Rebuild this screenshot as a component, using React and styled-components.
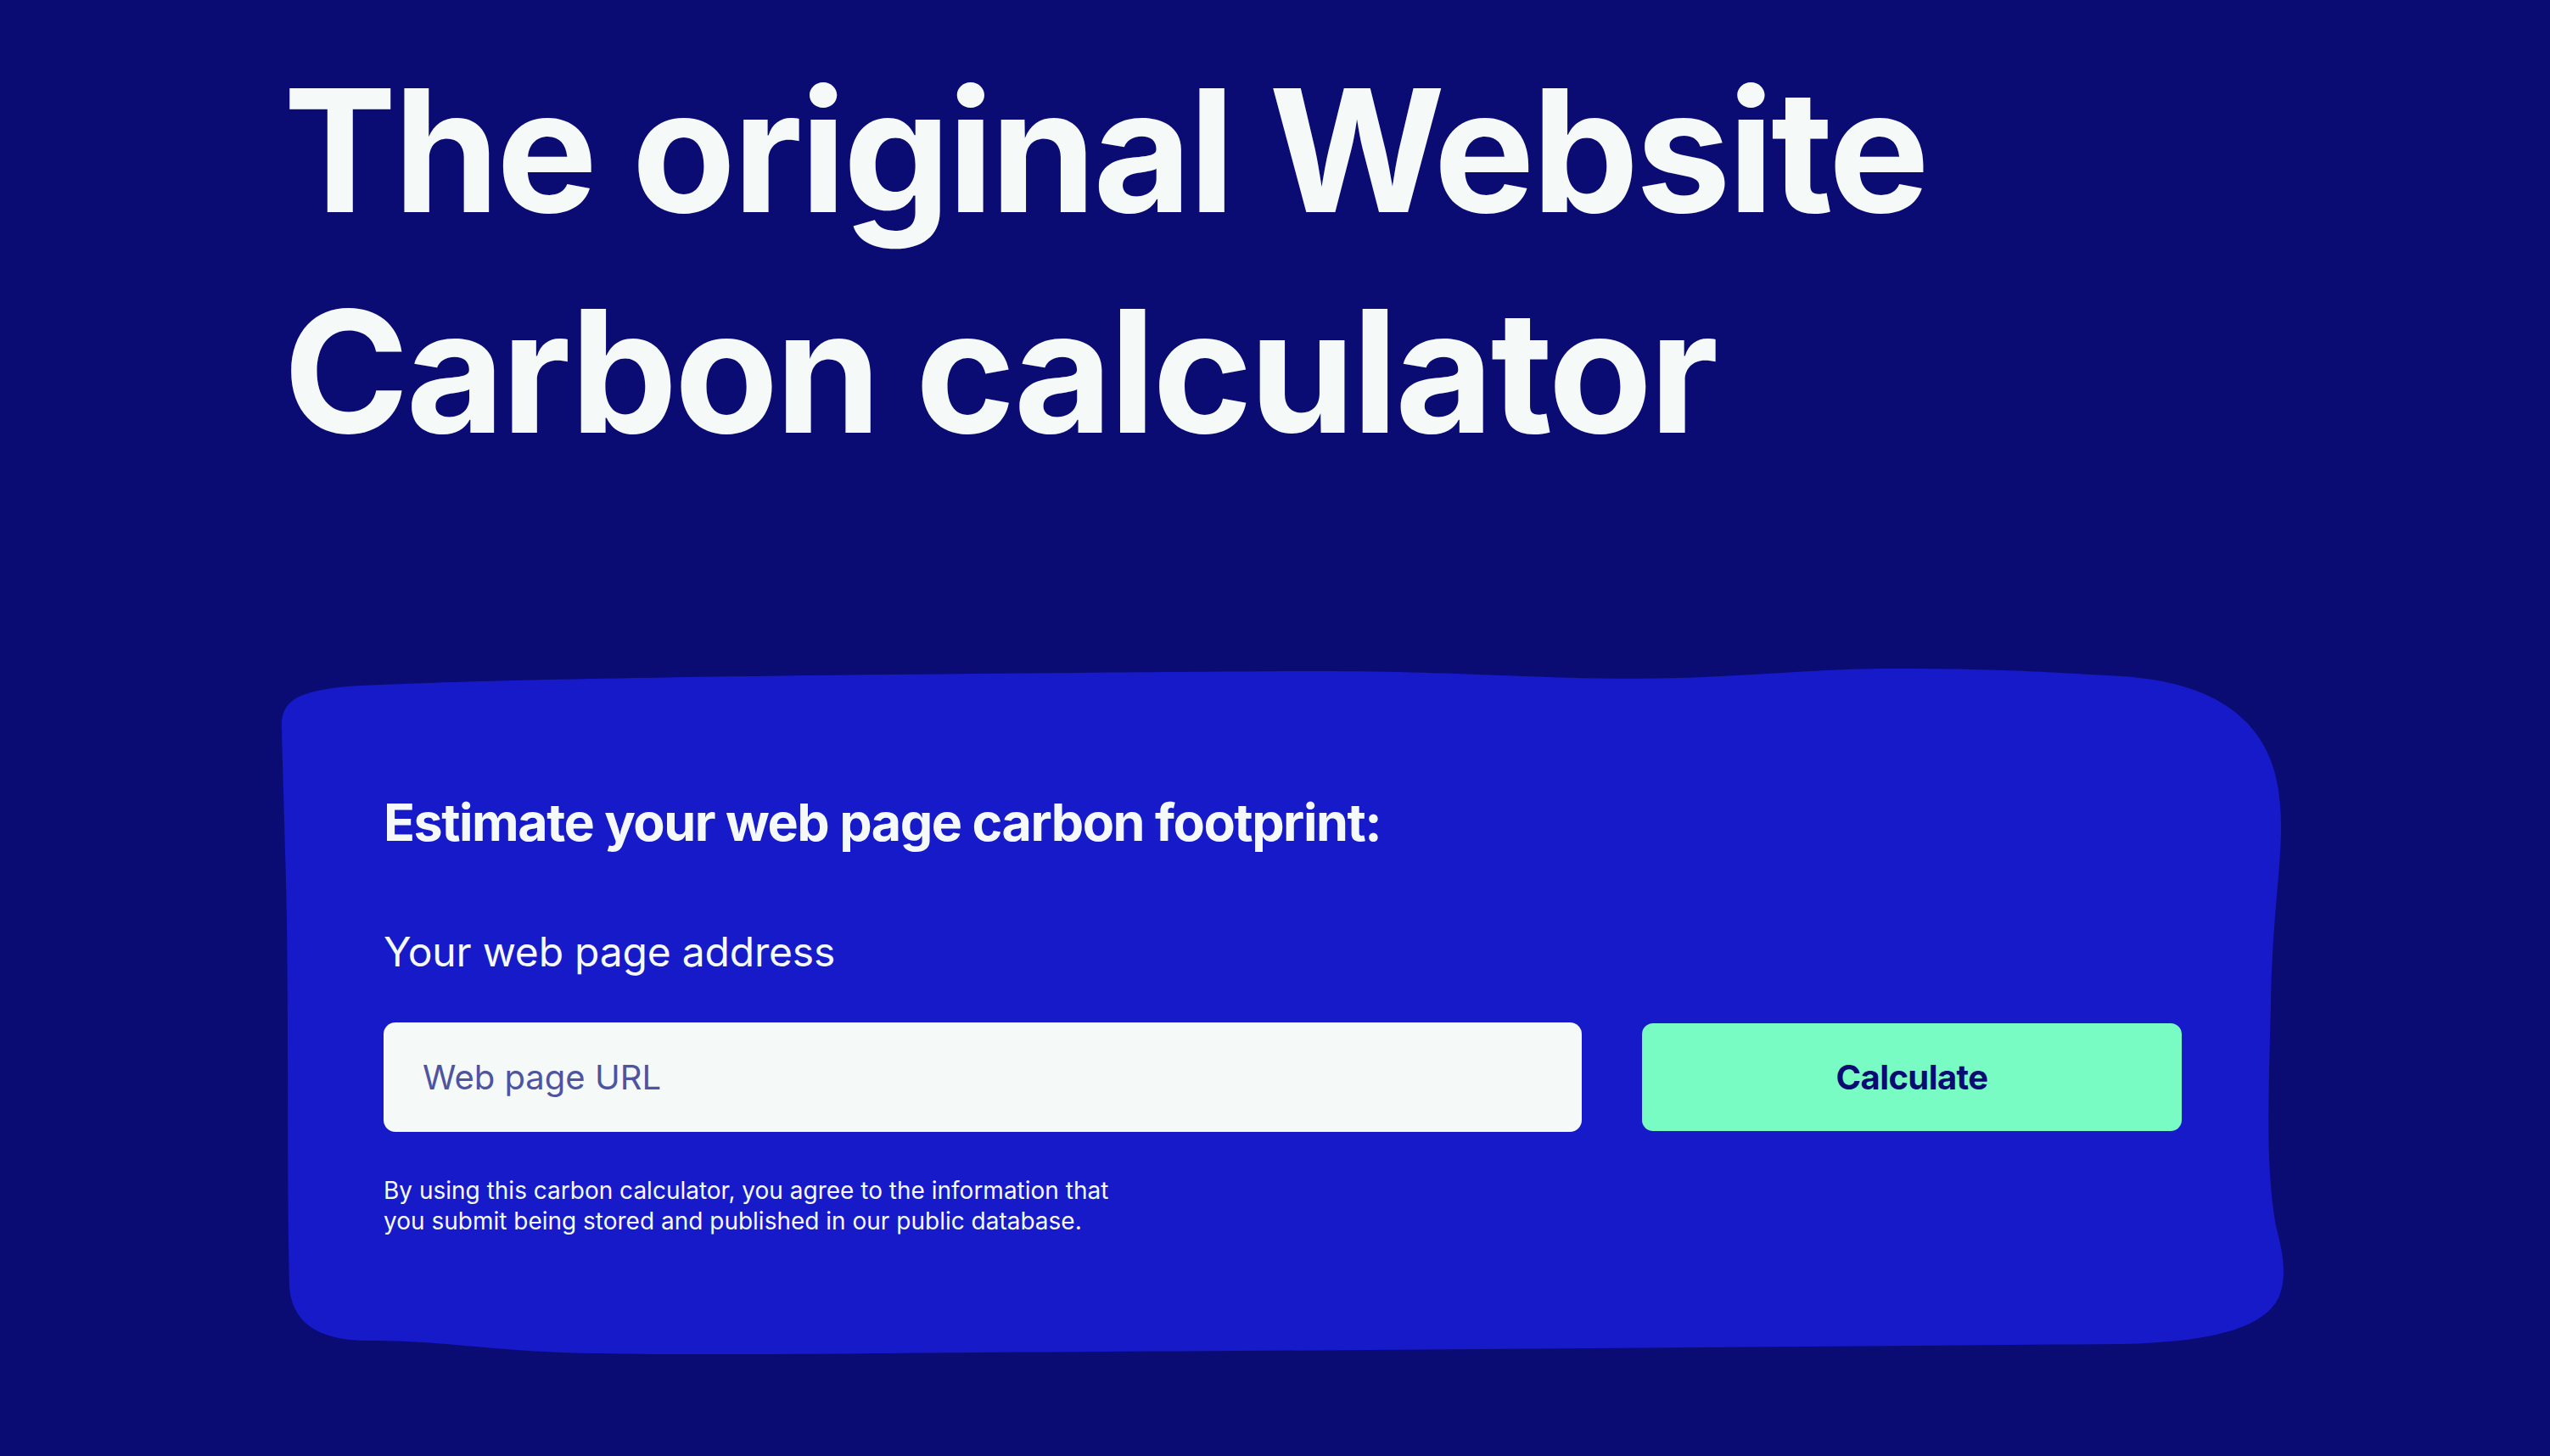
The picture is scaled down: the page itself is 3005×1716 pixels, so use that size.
import React from 'react'
import styled, { createGlobalStyle } from 'styled-components'

const GlobalStyle = createGlobalStyle`
  * {
    box-sizing: border-box;
  }

  html, body {
    margin: 0;
    padding: 0;
    background: #0a0c73;
  }

  body {
    font-family: Inter, "Noto Sans", "Liberation Sans", sans-serif;
    color: #f5f9f8;
    min-height: 1716px;
  }
`

function Blob() {
  return (
    <BlobShape viewBox="0 0 2362 815" preserveAspectRatio="none" aria-hidden="true">
      <path
        fill="#161ac8"
        d="M 2 75
           C 0 40, 20 30, 80 24
           C 300 12, 900 8, 1203 6
           C 1400 5, 1500 18, 1650 14
           C 1760 10, 1820 3, 1900 3
           C 2050 3, 2120 10, 2170 12
           C 2300 20, 2352 80, 2357 164
           C 2362 220, 2348 280, 2346 400
           C 2343 520, 2340 590, 2352 660
           C 2360 690, 2366 720, 2355 745
           C 2335 785, 2260 797, 2170 799
           C 1800 802, 1200 807, 820 809
           C 600 811, 450 812, 370 810
           C 250 808, 200 795, 103 795
           C 40 795, 14 770, 11 732
           C 8 600, 10 450, 8 300
           C 6 200, 3 120, 2 75 Z"
      />
    </BlobShape>
  )
}

export default function App() {
  return (
    <>
      <GlobalStyle />
      <Page>
        <Title>
          The original Website
          <br />
          Carbon calculator
        </Title>

        <Card>
          <Blob />
          <CardBody>
            <CardHeading>Estimate your web page carbon footprint:</CardHeading>
            <Label htmlFor="url">Your web page address</Label>
            <FormRow>
              <UrlInput id="url" type="text" placeholder="Web page URL" />
              <Button type="button">Calculate</Button>
            </FormRow>
            <Disclaimer>
              By using this carbon calculator, you agree to the information that
              you submit being stored and published in our public database.
            </Disclaimer>
          </CardBody>
        </Card>
      </Page>
    </>
  )
}

const Page = styled.main`
  padding: 47px 0 0 330px;
  width: 3005px;
`

const Title = styled.h1`
  margin: 0 0 218px 4px;
  font-size: 200px;
  line-height: 260px;
  font-weight: 700;
  letter-spacing: -3.5px;
  color: #f5f9f8;
`

const Card = styled.section`
  position: relative;
  width: 2362px;
`

const BlobShape = styled.svg`
  position: absolute;
  inset: 0;
  width: 100%;
  height: 100%;
  display: block;
`

const CardBody = styled.div`
  position: relative;
  display: flex;
  flex-direction: column;
  padding: 147px 121px 143px 122px;
`

const CardHeading = styled.h2`
  margin: 0 0 87px;
  font-size: 61px;
  line-height: 74px;
  font-weight: 700;
  letter-spacing: -1.5px;
`

const Label = styled.label`
  display: block;
  margin-bottom: 54px;
  font-size: 48px;
  line-height: 58px;
  font-weight: 400;
  letter-spacing: -0.2px;
`

const FormRow = styled.div`
  display: grid;
  grid-template-columns: 1fr 636px;
  gap: 71px;
  align-items: center;
`

const UrlInput = styled.input`
  height: 129px;
  width: 100%;
  border: none;
  border-radius: 14px;
  padding: 0 46px;
  background: #f5f9f8;
  font-family: inherit;
  font-size: 40px;
  color: #0a0c73;
  outline: none;

  &::placeholder {
    color: #4e54a0;
    opacity: 1;
  }
`

const Button = styled.button`
  height: 127px;
  border: none;
  border-radius: 13px;
  background: #78fcc4;
  color: #0a0c73;
  font-family: inherit;
  font-size: 40px;
  font-weight: 700;
  letter-spacing: -0.6px;
  cursor: pointer;
`

const Disclaimer = styled.p`
  margin: 51px 0 0;
  max-width: 880px;
  font-size: 28px;
  line-height: 36px;
  font-weight: 400;
`
